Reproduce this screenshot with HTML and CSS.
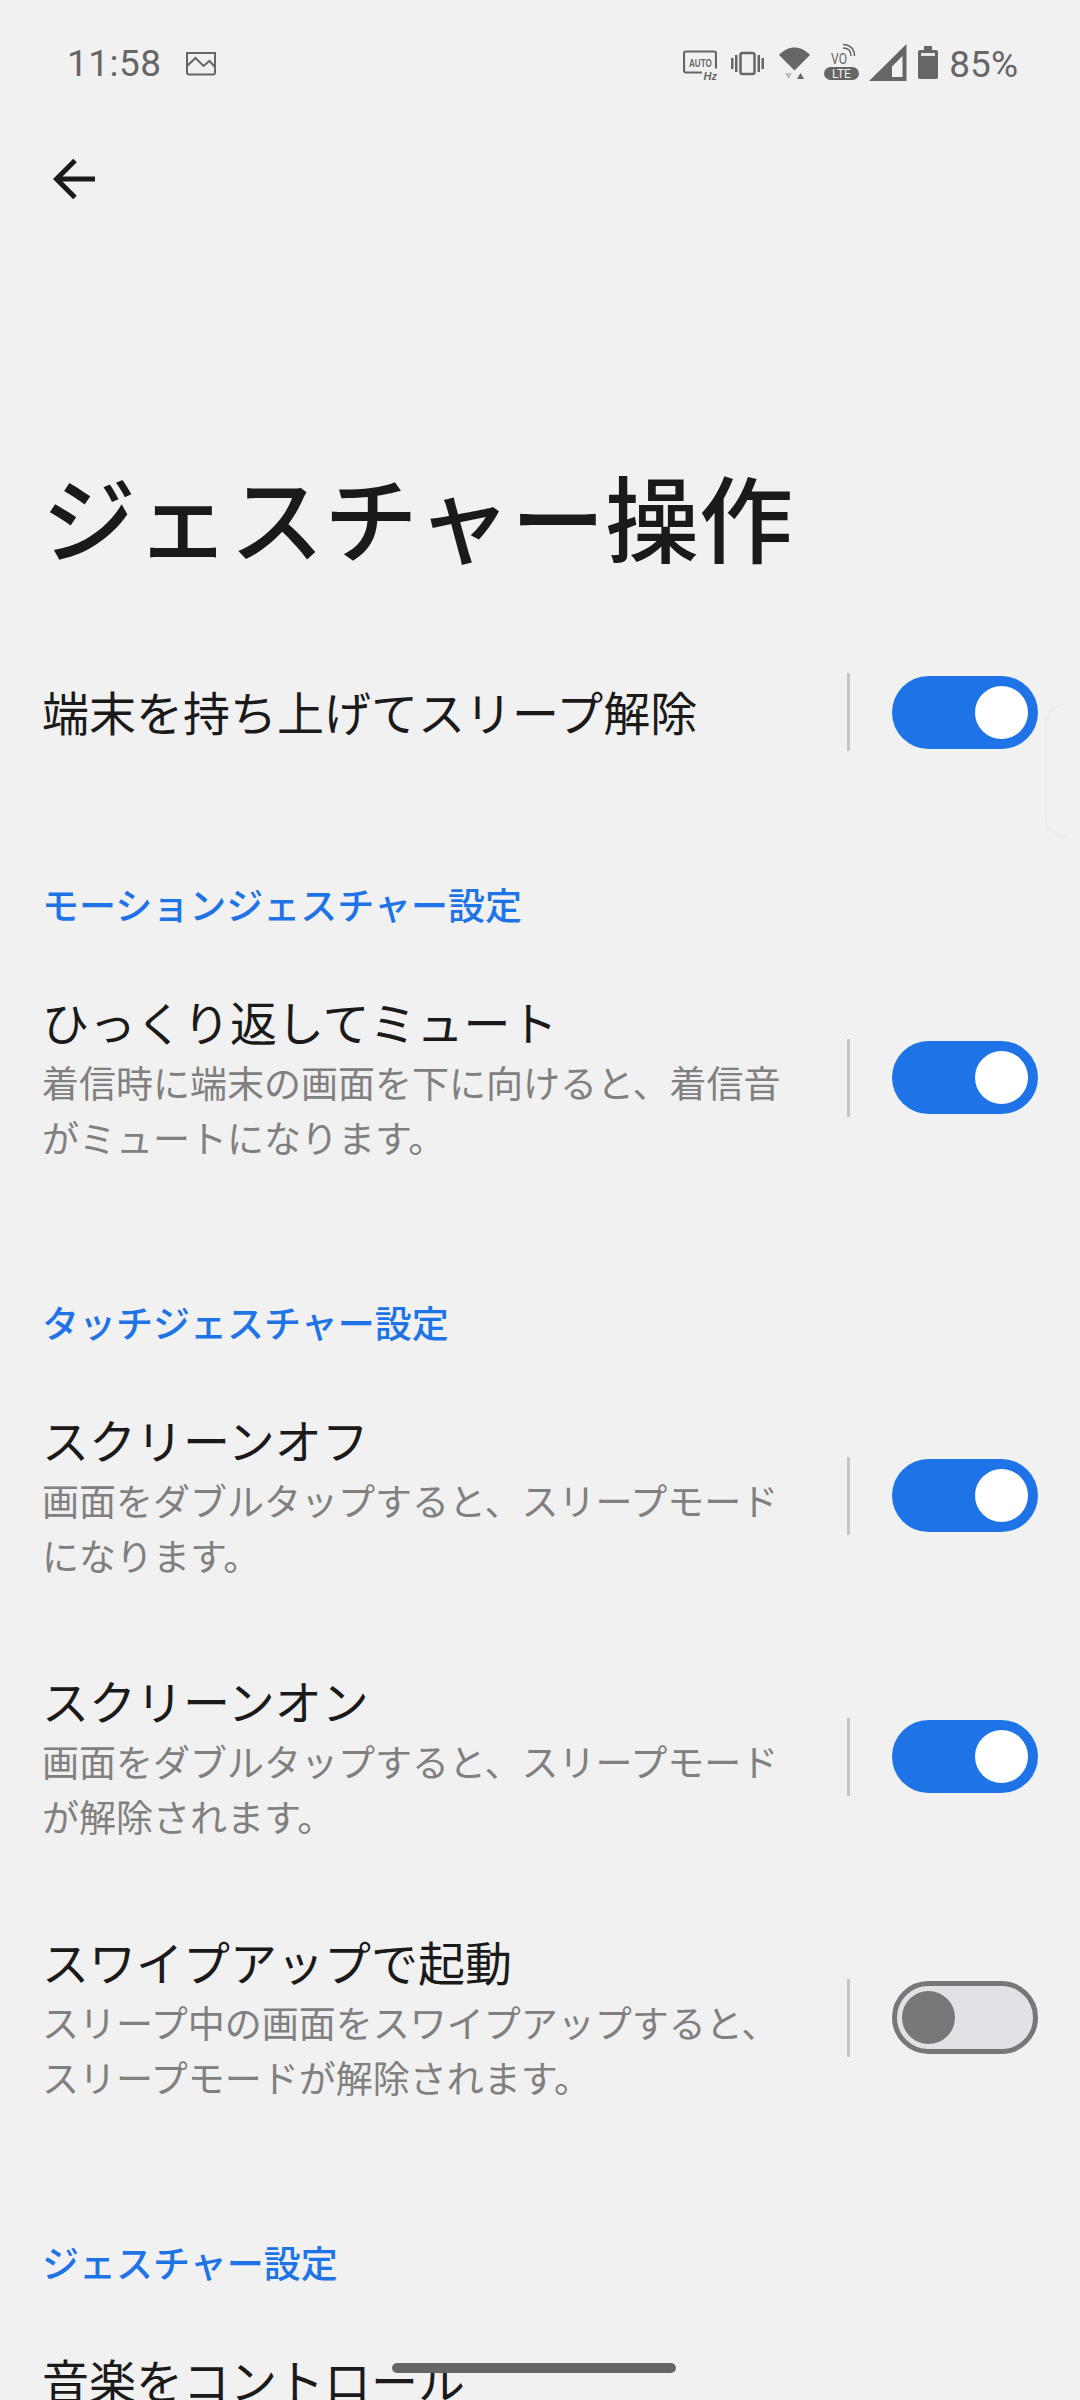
FILE: index.html
```html
<!DOCTYPE html>
<html lang="ja">
<head>
    <meta charset="utf-8"/>
    <title>ジェスチャー操作</title>
    <meta name="viewport" content="width=device-width, initial-scale=1.0"/>
    <link rel="stylesheet" href="styles.css">
</head>

<body>
<div class="page">
    <div class="statusbar">
        <div class="status-left">
            <span class="clock">11:58</span>
            <svg class="ic-image" width="30" height="46" viewBox="186 40 30 46">
                <path d="M187 53h28v19.500a2 2 0 0 1-2 2h-24a2 2 0 0 1-2-2z" fill="none" stroke="#666" stroke-width="2"/>
                <path d="M187 66l8.500-8 8 8 6-5 5.500 6" fill="none" stroke="#666" stroke-width="2"/>
            </svg>
        </div>
        <div class="status-right">
            <svg class="ic-auto" width="34" height="46" viewBox="683 40 34 46">
                <path d="M702 72.500h-16a2 2 0 0 1-2-2v-17a2 2 0 0 1 2-2h28a2 2 0 0 1 2 2v15" fill="none" stroke="#666" stroke-width="2.200"/>
                <text transform="translate(689 67) scale(.705 1)" class="svg-auto">AUTO</text>
                <text x="703.500" y="79.500" class="svg-hz">Hz</text>
            </svg>
            <svg class="ic-vibrate" width="33" height="46" viewBox="731 40 33 46">
                <rect x="740.500" y="53" width="14" height="21" rx="2" fill="none" stroke="#666" stroke-width="2.500"/>
                <path d="M735 55h2.500v17h-2.500zM731 58h2.500v11h-2.500zM757.500 55h2.500v17h-2.500zM761.500 58h2.500v11h-2.500z" fill="#666"/>
            </svg>
            <svg class="ic-wifi" width="31" height="46" viewBox="779 40 31 46">
                <path d="M779 55c9-10 22-10 31 0l-15.500 15.500z" fill="#666"/>
                <path d="M785 73h7l-3.500 6z" fill="#bbb"/>
                <path d="M797 79h7l-3.500-6z" fill="#666"/>
            </svg>
            <svg class="ic-volte" width="35" height="46" viewBox="824 40 35 46">
                <text x="831" y="63.500" class="svg-vo" textLength="16" lengthAdjust="spacingAndGlyphs">VO</text>
                <path d="M843 48c5 0 8 3 8 8M843 44.500c7 0 11.500 4.500 11.500 11.500" fill="none" stroke="#666" stroke-width="1.500"/>
                <rect x="824" y="67" width="35" height="13" rx="6.500" fill="#666"/>
                <text x="841.500" y="77.500" class="svg-lte" text-anchor="middle">LTE</text>
            </svg>
            <svg class="ic-signal" width="38" height="46" viewBox="869 40 38 46">
                <path fill-rule="evenodd" d="M906.500 44v37h-37.500zM892 66.500v10.500h10.500v-21z" fill="#666"/>
            </svg>
            <svg class="ic-battery" width="20" height="46" viewBox="918 40 20 46">
                <path d="M924 46h8v4h4a2 2 0 0 1 2 2v25a2 2 0 0 1-2 2h-16a2 2 0 0 1-2-2v-25a2 2 0 0 1 2-2h4z" fill="#666"/>
                <rect x="921" y="53" width="14" height="3" fill="#e4e4e4"/>
            </svg>
            <span class="percent">85%</span>
        </div>
    </div>

    <div class="appbar">
        <svg width="42" height="42" viewBox="0 0 42 42">
            <path d="M42 21H4M22 2.500L3.500 21 22 39.500" fill="none" stroke="#1a1a1a" stroke-width="5"/>
        </svg>
    </div>

    <h1 class="title">ジェスチャー操作</h1>

    <div class="row">
        <div class="text"><div class="label">端末を持ち上げてスリープ解除</div></div>
        <div class="divider"></div>
        <div class="switch on"></div>
    </div>

    <div class="head">モーションジェスチャー設定</div>
    <div class="row">
        <div class="text">
            <div class="label">ひっくり返してミュート</div>
            <div class="desc">着信時に端末の画面を下に向けると、着信音がミュートになります。</div>
        </div>
        <div class="divider"></div>
        <div class="switch on"></div>
    </div>

    <div class="head">タッチジェスチャー設定</div>
    <div class="row">
        <div class="text">
            <div class="label">スクリーンオフ</div>
            <div class="desc">画面をダブルタップすると、スリープモードになります。</div>
        </div>
        <div class="divider"></div>
        <div class="switch on"></div>
    </div>
    <div class="row">
        <div class="text">
            <div class="label">スクリーンオン</div>
            <div class="desc">画面をダブルタップすると、スリープモードが解除されます。</div>
        </div>
        <div class="divider"></div>
        <div class="switch on"></div>
    </div>
    <div class="row">
        <div class="text">
            <div class="label">スワイプアップで起動</div>
            <div class="desc">スリープ中の画面をスワイプアップすると、スリープモードが解除されます。</div>
        </div>
        <div class="divider"></div>
        <div class="switch off"></div>
    </div>

    <div class="head">ジェスチャー設定</div>
    <div class="row last">
        <div class="text"><div class="label">音楽をコントロール</div></div>
    </div>

    <div class="edge-handle"></div>
    <div class="home-bar"></div>
</div>
</body>
</html>
```

FILE: styles.css
```css
html, body {
    margin: 0;
    padding: 0;
    background: #f1f1f1;
    overflow: hidden;
}

.page {
    position: relative;
    width: 1080px;
    height: 2400px;
    overflow: hidden;
    background: #f1f1f1;
    font-family: "Noto Sans CJK JP", "Noto Sans", sans-serif;
    color: #1a1a1a;
}

.statusbar {
    display: flex;
    justify-content: space-between;
    align-items: center;
    height: 126px;
    padding: 0 62px 0 67px;
    box-sizing: border-box;
    font-family: Roboto, sans-serif;
    color: #666;
}

.status-left,
.status-right {
    display: flex;
    align-items: center;
}

.clock {
    font-size: 37px;
    width: 119px;
    letter-spacing: 0.5px;
}

.ic-auto { margin-right: 14px; }
.ic-vibrate { margin-right: 15px; }
.ic-wifi { margin-right: 14px; }
.ic-volte { margin-right: 10px; }
.ic-signal { margin-right: 11px; }
.ic-battery { margin-right: 11px; }

.percent {
    font-size: 37px;
    padding-top: 3px;
}

.svg-auto {
    font: bold 11.500px "Liberation Sans", sans-serif;
    fill: #666;
}

.svg-hz {
    font: italic bold 11px "Liberation Sans", sans-serif;
    fill: #666;
}

.svg-vo {
    font: 14px Roboto, sans-serif;
    fill: #666;
}

.svg-lte {
    font: 12px Roboto, sans-serif;
    fill: #f1f1f1;
}

.appbar {
    display: flex;
    align-items: center;
    height: 105px;
    padding-left: 53px;
}

.title {
    margin: 0;
    padding: 224px 0 59px 42px;
    font-size: 94px;
    line-height: 120px;
    font-weight: 500;
    white-space: nowrap;
}

.row {
    display: flex;
    align-items: center;
    box-sizing: border-box;
    min-height: 154px;
    padding: 39px 42px;
}

.row.last {
    align-items: flex-start;
}

.text {
    width: 762px;
    margin-right: 43px;
    padding-bottom: 4px;
}

.label {
    font-size: 47px;
    line-height: 69px;
    white-space: nowrap;
}

.desc {
    font-size: 37px;
    line-height: 55px;
    color: #808080;
}

.divider {
    flex: none;
    width: 3px;
    height: 78px;
    margin-right: 42px;
    background: #c4c4c4;
}

.switch {
    position: relative;
    flex: none;
    width: 146px;
    height: 73px;
    box-sizing: border-box;
    border-radius: 37px;
}

.switch::after {
    content: "";
    position: absolute;
    width: 53px;
    height: 53px;
    border-radius: 50%;
}

.switch.on {
    background: #1e74e6;
}

.switch.on::after {
    top: 10px;
    right: 10px;
    background: #fff;
}

.switch.off {
    background: #e2e2e6;
    border: 5px solid #777;
}

.switch.off::after {
    top: 5px;
    left: 5px;
    background: #777;
}

.head {
    padding: 87px 0 16px 42px;
    font-size: 37px;
    line-height: 54px;
    font-weight: 500;
    color: #1e74e6;
}

.edge-handle {
    position: absolute;
    top: 703px;
    left: 1045px;
    width: 21px;
    height: 135px;
    box-sizing: border-box;
    border: 2px solid #ebebeb;
    border-right: none;
    border-radius: 20px 0 0 20px;
}

.home-bar {
    position: absolute;
    top: 2363px;
    left: 392px;
    width: 284px;
    height: 10px;
    border-radius: 5px;
    background: #666;
}
```
